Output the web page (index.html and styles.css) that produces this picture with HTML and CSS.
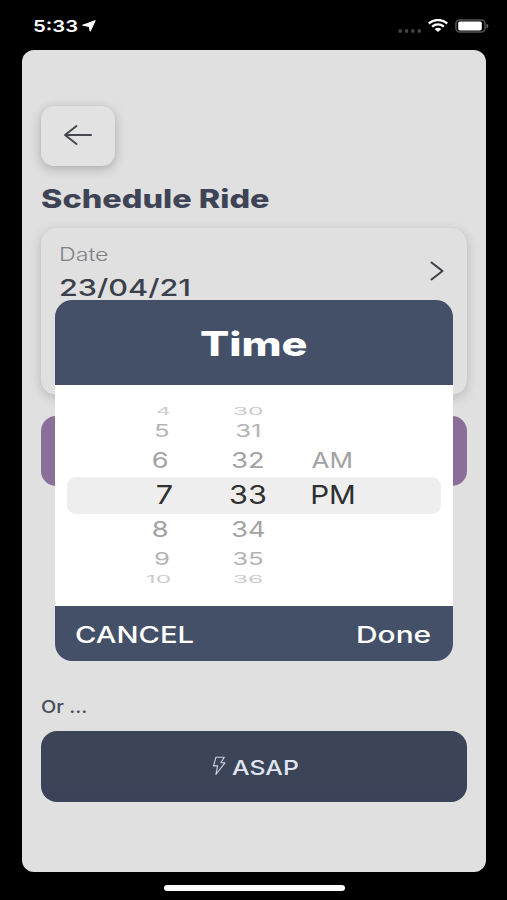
FILE: index.html
```
<!DOCTYPE html>
<html lang="en">
<head>
<meta charset="utf-8">
<title>Schedule Ride</title>
<link rel="stylesheet" href="styles.css">
</head>
<body>
<header class="status">
  <div class="status-left">
    <span class="clock wide">5:33</span>
    <svg class="locate" viewBox="0 0 14 12" width="14" height="12"><path d="M13 .7 8.2 10.9 7.3 6.3 .9 5.2Z" fill="#fff" stroke="#fff" stroke-width="1.2" stroke-linejoin="round"/></svg>
  </div>
  <div class="status-right">
    <svg viewBox="0 0 24 4" width="24" height="4" fill="#444"><circle cx="2.2" cy="2" r="1.9"/><circle cx="8.5" cy="2" r="1.9"/><circle cx="14.8" cy="2" r="1.9"/><circle cx="21.2" cy="2" r="1.9"/></svg>
    <svg class="wifi" viewBox="0 0 20 13" width="20" height="13" fill="none" stroke="#fff" stroke-width="2.4"><path d="M.8 4.5C6-.1 14-.1 19.2 4.5"/><path d="M4.1 7.7c3.5-2.9 8.3-2.9 11.8 0"/><path d="M6.6 9.9c2-1.5 4.8-1.5 6.8 0L10 12.9Z" fill="#fff" stroke="none"/></svg>
    <svg class="battery" viewBox="0 0 34 14" width="34" height="14"><rect x=".9" y=".9" width="29.2" height="12.2" rx="3.8" fill="none" stroke="#535353" stroke-width="1.5"/><rect x="3.2" y="2.6" width="23.6" height="8.8" rx="1.6" fill="#fff"/><path d="M31.5 4.7c2.4.8 2.4 3.8 0 4.6Z" fill="#6a6a6a"/></svg>
  </div>
</header>

<main class="screen">
  <button class="back" aria-label="Back">
    <svg viewBox="0 0 30 22" width="30" height="22" fill="none" stroke="#45474f" stroke-width="2" stroke-linecap="round" stroke-linejoin="round"><path d="M28 11H2M13.5 2 2 11l11.5 9"/></svg>
  </button>
  <h1 class="title wide">Schedule Ride</h1>
  <section class="card">
    <div class="field">
      <span class="field-label wide">Date</span>
      <span class="field-value wide">23/04/21</span>
    </div>
    <svg class="chevron" viewBox="0 0 14 20" width="14" height="20" fill="none" stroke="#3c3f46" stroke-width="2" stroke-linecap="round" stroke-linejoin="round"><path d="m1.5 1.5 11 8.5-11 8.5"/></svg>
  </section>
  <button class="confirm" aria-label="Confirm"></button>
  <p class="or wide">Or ...</p>
  <button class="asap">
    <svg viewBox="0 0 14 20" width="14" height="20" fill="none" stroke="#cdd4e6" stroke-width="1.1" stroke-linejoin="round"><path d="M4 1.2h8.3L8.9 6.8h4L3.9 18.5l1.7-8.6H1.5Z"/></svg>
    <span class="wide">ASAP</span>
  </button>

  <div class="dialog" role="dialog">
    <div class="dialog-head"><span class="wide">Time</span></div>
    <div class="picker">
      <div class="wheel hours">
        <span class="far up">4</span><span class="mid up">5</span><span class="near">6</span><span class="on">7</span><span class="near">8</span><span class="mid">9</span><span class="far down">10</span>
      </div>
      <div class="wheel minutes">
        <span class="far up">30</span><span class="mid up">31</span><span class="near">32</span><span class="on">33</span><span class="near">34</span><span class="mid">35</span><span class="far down">36</span>
      </div>
      <div class="wheel period">
        <span></span><span></span><span class="near">AM</span><span class="on">PM</span>
      </div>
    </div>
    <div class="dialog-foot">
      <span class="cancel wide">CANCEL</span>
      <span class="done wide">Done</span>
    </div>
  </div>
</main>
<div class="home-bar"></div>
</body>
</html>
```
FILE: styles.css
```
* { box-sizing: border-box; }
body {
  margin: 0;
  height: 900px;
  overflow: hidden;
  background: #000;
  font-family: Inter, "Liberation Sans", sans-serif;
  color: #3e4456;
}
h1, p { margin: 0; }
button { display: block; border: 0; padding: 0; font: inherit; }
svg { display: block; flex: none; }

/* Expanded letterforms */
.wide {
  display: block;
  width: max-content;
  white-space: pre;
  transform: scaleX(var(--stretch, 1.25));
  transform-origin: 0 50%;
}

.status {
  height: 49.5px;
  padding: 0 18px 0 32.6px;
  display: flex;
  justify-content: space-between;
}
.status-left { display: flex; padding-top: 16px; }
.clock {
  --stretch: 1.23;
  width: 49px;
  font-size: 16.5px;
  line-height: 20px;
  font-weight: 600;
  color: #fff;
}
.locate { margin-top: 4.3px; }
.status-right { display: flex; }
.status-right > svg:first-child { margin-top: 28.5px; }
.wifi { margin: 19.3px 0 0 6px; }
.battery { margin: 19.3px 0 0 7px; }

.screen {
  position: relative;
  width: 463.3px;
  height: 822.5px;
  margin-left: 22.3px;
  padding: 56px 18.5px 0;
  border-radius: 12px;
  background: #e0e0e0;
  overflow: hidden;
}
.back {
  width: 74px;
  height: 60px;
  display: grid;
  place-items: center;
  padding-bottom: 1.5px;
  border-radius: 13px;
  background: #e2e2e2;
  box-shadow: 0 3px 12px rgba(0, 0, 0, .24), 0 0 1px rgba(0, 0, 0, .08);
}
.title {
  --stretch: 1.262;
  margin-top: 17px;
  font-size: 25.7px;
  line-height: 31px;
  font-weight: 800;
}
.card {
  height: 167px;
  margin-top: 14.3px;
  padding: 16.5px 23.5px 0 18px;
  display: flex;
  justify-content: space-between;
  border-radius: 15px;
  background: #e0e0e0;
  box-shadow: 0 3px 12px rgba(0, 0, 0, .18), 0 0 1px rgba(0, 0, 0, .1);
}
.field-label {
  --stretch: 1.26;
  font-size: 18.4px;
  line-height: 20px;
  font-weight: 300;
  color: #7f8187;
}
.field-value {
  --stretch: 1.33;
  margin-top: 11px;
  font-size: 23px;
  line-height: 27px;
  font-weight: 500;
  color: #3b404c;
}
.chevron { margin-top: 17px; }
.confirm {
  width: 100%;
  height: 70px;
  margin-top: 21.5px;
  border-radius: 15px;
  background: #8a7099;
}
.or {
  --stretch: 1.17;
  margin-top: 211px;
  font-size: 17px;
  line-height: 20px;
  font-weight: 500;
  color: #484c57;
}
.asap {
  width: 100%;
  height: 70.5px;
  margin-top: 14.2px;
  padding: 2.5px 0 0 171.5px;
  display: flex;
  align-items: center;
  border-radius: 16px;
  background: linear-gradient(#3b4557 65%, #3b435b 82%);
  color: #dfe4f1;
}
.asap svg { margin-top: -4px; }
.asap .wide {
  --stretch: 1.24;
  margin-left: 6px;
  font-size: 20px;
  font-weight: 500;
}

.dialog {
  position: absolute;
  left: 32.5px;
  top: 250px;
  width: 398.4px;
  height: 361.7px;
  display: flex;
  flex-direction: column;
  border-radius: 17px;
  overflow: hidden;
  background: #fff;
  color: #fff;
}
.dialog-head {
  height: 85px;
  padding: 24.3px 0 0 145.5px;
  background: #445067;
}
.dialog-head .wide {
  --stretch: 1.29;
  font-size: 33.5px;
  line-height: 40px;
  font-weight: 800;
}
.picker {
  flex: 1;
  display: flex;
  padding: 18.5px 0 0 65px;
  position: relative;
}
.picker::before {
  content: "";
  position: absolute;
  inset: 92px 12px auto 12.3px;
  height: 37.7px;
  border-radius: 9px;
  background: #eee;
}
.wheel {
  position: relative;
  width: 85px;
  height: 187px;
  display: grid;
  grid-template-rows: 17px 22px 38px 30px 40px 18px 22px;
  place-items: center;
  font-size: 26px;
  line-height: 26px;
}
.wheel span { margin: -10px 0; transform: scale(var(--sx), var(--sy)); }
.wheel .on { --sx: 1.18; --sy: 1; color: #303030; }
.wheel .near { --sx: 1.045; --sy: .82; color: #a2a2a2; }
.wheel .mid { --sx: .99; --sy: .67; color: #b4b4b4; }
.wheel .far { --sx: .94; --sy: .4; color: #cbcbcb; }
.wheel .far.up { margin-top: -11px; }
.wheel .mid.up { margin-top: -9.5px; }
.wheel .near { margin-top: -9.5px; }
.hours .on { margin-left: 4px; }
.hours .near { margin-left: -4px; }
.hours .far.up { --sx: .87; margin-left: 3px; }
.hours .far.down { margin-left: -7px; }
.minutes { margin-left: 1px; }
.period { margin-left: -1px; }
.period .near { --sx: 1; margin-left: 0; }
.period .on { --sx: 1.14; margin-left: 2px; }
.dialog-foot {
  height: 55.5px;
  padding: 15.5px 0 0 20px;
  display: flex;
  background: #445067;
  font-size: 23px;
  line-height: 28px;
  font-weight: 500;
}
.cancel { --stretch: 1.27; width: 281.5px; }
.done { --stretch: 1.3; }

.home-bar {
  width: 181px;
  height: 6px;
  margin: 13.2px 0 0 163.5px;
  border-radius: 3px;
  background: #fff;
}
```
